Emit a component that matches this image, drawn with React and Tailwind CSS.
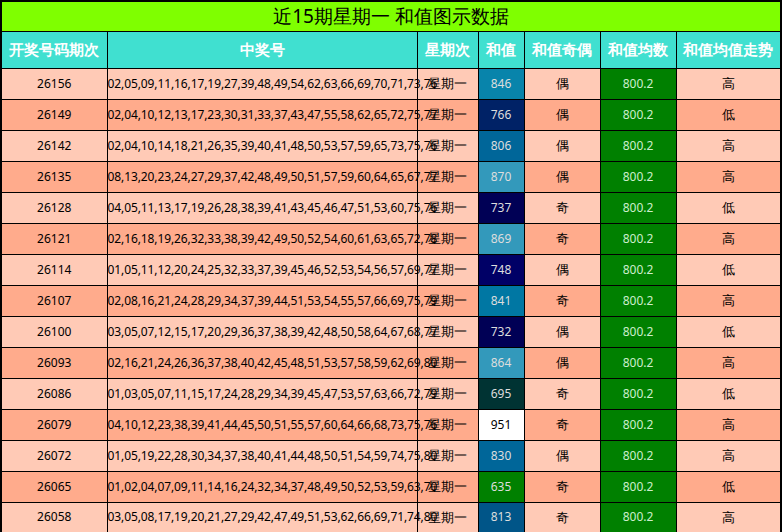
const rows = [
  ["26156", "02,05,09,11,16,17,19,27,39,48,49,54,62,63,66,69,70,71,73,76", "846", "bg-[#0884ab]", "偶", "高"],
  ["26149", "02,04,10,12,13,17,23,30,31,33,37,43,47,55,58,62,65,72,75,77", "766", "bg-[#002266]", "偶", "低"],
  ["26142", "02,04,10,14,18,21,26,35,39,40,41,48,50,53,57,59,65,73,75,76", "806", "bg-[#006699]", "偶", "高"],
  ["26135", "08,13,20,23,24,27,29,37,42,48,49,50,51,57,59,60,64,65,67,77", "870", "bg-[#3399bb]", "偶", "高"],
  ["26128", "04,05,11,13,17,19,26,28,38,39,41,43,45,46,47,51,53,60,75,76", "737", "bg-[#000055]", "奇", "低"],
  ["26121", "02,16,18,19,26,32,33,38,39,42,49,50,52,54,60,61,63,65,72,78", "869", "bg-[#3399bb]", "奇", "高"],
  ["26114", "01,05,11,12,20,24,25,32,33,37,39,45,46,52,53,54,56,57,69,77", "748", "bg-[#000066]", "偶", "低"],
  ["26107", "02,08,16,21,24,28,29,34,37,39,44,51,53,54,55,57,66,69,75,79", "841", "bg-[#0077a3]", "奇", "高"],
  ["26100", "03,05,07,12,15,17,20,29,36,37,38,39,42,48,50,58,64,67,68,77", "732", "bg-[#000055]", "偶", "低"],
  ["26093", "02,16,21,24,26,36,37,38,40,42,45,48,51,53,57,58,59,62,69,80", "864", "bg-[#3399bb]", "偶", "高"],
  ["26086", "01,03,05,07,11,15,17,24,28,29,34,39,45,47,53,57,63,66,72,79", "695", "bg-[#003333]", "奇", "低"],
  ["26079", "04,10,12,23,38,39,41,44,45,50,51,55,57,60,64,66,68,73,75,76", "951", "bg-white", "奇", "高"],
  ["26072", "01,05,19,22,28,30,34,37,38,40,41,44,48,50,51,54,59,74,75,80", "830", "bg-[#006699]", "偶", "高"],
  ["26065", "01,02,04,07,09,11,14,16,24,32,34,37,48,49,50,52,53,59,63,70", "635", "bg-[#008000]", "奇", "低"],
  ["26058", "03,05,08,17,19,20,21,27,29,42,47,49,51,53,62,66,69,71,74,80", "813", "bg-[#005588]", "奇", "高"],
];

const cjk = "font-[family-name:'Noto_Sans_CJK_SC',sans-serif]";
const serif = "font-[family-name:'Liberation_Serif',serif]";
const sansNum = "font-[family-name:'DejaVu_Sans',sans-serif]";

export default function App() {
  return (
    <div className="w-[782px] h-[532px] bg-white overflow-hidden">
      <table className="w-[782px] border-collapse border-2 border-black table-fixed">
        <colgroup>
          <col className="w-[106px]" />
          <col className="w-[310px]" />
          <col className="w-[61px]" />
          <col className="w-[46px]" />
          <col className="w-[76px]" />
          <col className="w-[76px]" />
          <col />
        </colgroup>
        <thead>
          <tr className="h-[29px]">
            <th colSpan={7} className={`bg-[#7fff00] border border-black text-[19px] font-normal text-black ${cjk}`}>
              近15期星期一 和值图示数据
            </th>
          </tr>
          <tr className="h-[37px]">
            {["开奖号码期次", "中奖号", "星期次", "和值", "和值奇偶", "和值均数", "和值均值走势"].map((h) => (
              <th key={h} className={`bg-[#40e0d0] border border-black text-white text-[15px] font-bold ${cjk}`}>
                {h}
              </th>
            ))}
          </tr>
        </thead>
        <tbody>
          {rows.map((r, i) => {
            const bg = i % 2 === 0 ? "bg-[#ffcab6]" : "bg-[#ffab8c]";
            return (
              <tr key={r[0]} className="h-[31px] text-center">
                <td className={`${bg} border border-black text-[12px] text-black ${serif}`}>{r[0]}</td>
                <td className={`${bg} border border-black text-[12px] tracking-[-0.1px] whitespace-nowrap text-black ${serif}`}>{r[1]}</td>
                <td className={`${bg} border border-black text-[13px] text-black ${cjk}`}>星期一</td>
                <td className={`${r[3]} border border-black text-[12px] ${r[2] === "951" ? "text-black" : "text-[#dddddd]"} ${sansNum}`}>{r[2]}</td>
                <td className={`${bg} border border-black text-[13px] text-black ${cjk}`}>{r[4]}</td>
                <td className={`bg-[#008000] border border-black text-[12px] text-[#cceecc] ${sansNum}`}>800.2</td>
                <td className={`${bg} border border-black text-[13px] text-black ${cjk}`}>{r[5]}</td>
              </tr>
            );
          })}
        </tbody>
      </table>
    </div>
  );
}
